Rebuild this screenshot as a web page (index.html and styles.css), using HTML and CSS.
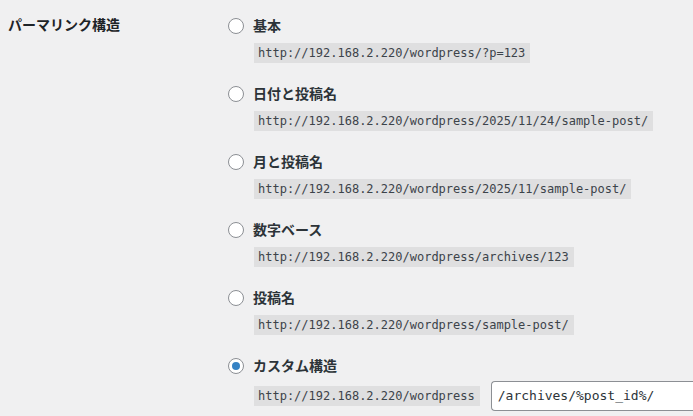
FILE: index.html
```html
<!DOCTYPE html>
<html lang="ja">
<head>
<meta charset="utf-8">
<title>パーマリンク設定</title>
<link rel="stylesheet" href="styles.css">
</head>
<body>
<div class="form-row">
  <div class="th">パーマリンク構造</div>
  <div class="options">
    <div class="option">
      <label class="choice"><span class="radio"></span><span class="label-text">基本</span></label>
      <div class="example"><code>http://192.168.2.220/wordpress/?p=123</code></div>
    </div>
    <div class="option">
      <label class="choice"><span class="radio"></span><span class="label-text">日付と投稿名</span></label>
      <div class="example"><code>http://192.168.2.220/wordpress/2025/11/24/sample-post/</code></div>
    </div>
    <div class="option">
      <label class="choice"><span class="radio"></span><span class="label-text">月と投稿名</span></label>
      <div class="example"><code>http://192.168.2.220/wordpress/2025/11/sample-post/</code></div>
    </div>
    <div class="option">
      <label class="choice"><span class="radio"></span><span class="label-text">数字ベース</span></label>
      <div class="example"><code>http://192.168.2.220/wordpress/archives/123</code></div>
    </div>
    <div class="option">
      <label class="choice"><span class="radio"></span><span class="label-text">投稿名</span></label>
      <div class="example"><code>http://192.168.2.220/wordpress/sample-post/</code></div>
    </div>
    <div class="option option-custom">
      <label class="choice"><span class="radio radio-checked"></span><span class="label-text">カスタム構造</span></label>
      <div class="custom-row">
        <code>http://192.168.2.220/wordpress</code>
        <div class="text-input">/archives/%post_id%/</div>
      </div>
    </div>
  </div>
</div>
</body>
</html>
```
FILE: styles.css
```css
html, body {
  margin: 0;
  padding: 0;
  background: #f0f0f1;
  overflow: hidden;
}
body {
  font-family: "Noto Sans CJK JP", "Noto Sans", sans-serif;
  color: #1d2327;
  font-size: 14px;
}
.form-row {
  display: flex;
  padding-left: 8px;
}
.th {
  width: 220px;
  flex: none;
  padding-top: 14px;
  line-height: 20px;
  font-weight: 700;
}
.options {
  display: flex;
  flex-direction: column;
  padding-top: 15px;
  min-width: 0;
  flex: 1;
}
.option {
  height: 68px;
  display: flex;
  flex-direction: column;
}
.choice {
  display: flex;
  align-items: center;
  height: 20px;
  gap: 9px;
}
.radio {
  width: 16px;
  height: 16px;
  box-sizing: border-box;
  border: 1px solid #8c8f94;
  border-radius: 50%;
  background: #fff;
  flex: none;
  display: flex;
  align-items: center;
  justify-content: center;
  margin-top: 2px;
}
.radio-checked::after {
  content: "";
  width: 8px;
  height: 8px;
  border-radius: 50%;
  background: #3582c4;
}
.label-text {
  font-weight: 700;
  color: #2c3338;
}
.example {
  margin-top: 8px;
  padding-left: 26px;
  display: flex;
}
code {
  font-family: "DejaVu Sans Mono", "Liberation Mono", monospace;
  font-size: 12px;
  line-height: 20px;
  height: 20px;
  padding: 0 5px 0 4px;
  background: #dfdfe0;
  color: #3c434a;
  white-space: nowrap;
}
.custom-row {
  margin-top: 6px;
  padding-left: 26px;
  display: flex;
  align-items: center;
  gap: 11px;
}
.text-input {
  flex: 1;
  height: 30px;
  box-sizing: border-box;
  border: 1px solid #8c8f94;
  border-right: none;
  border-radius: 4px 0 0 4px;
  background: #fff;
  padding-left: 6px;
  font-family: "DejaVu Sans Mono", "Liberation Mono", monospace;
  font-size: 13px;
  line-height: 28px;
  color: #2c3338;
  white-space: nowrap;
}
```
